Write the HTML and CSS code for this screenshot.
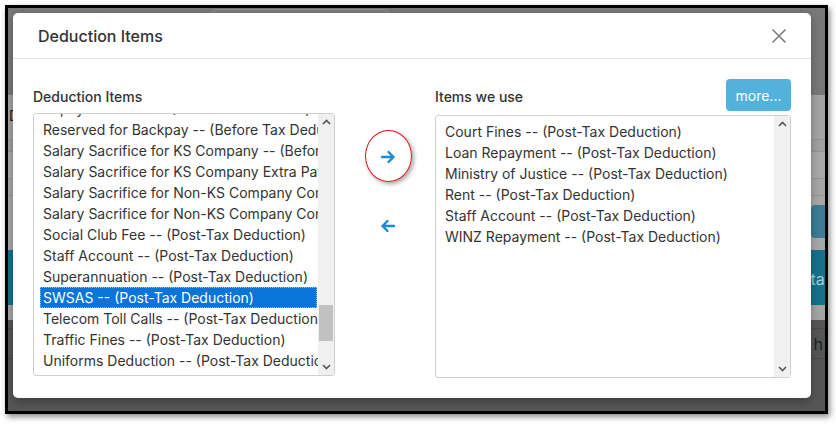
FILE: index.html
```html
<!DOCTYPE html>
<html>
<head>
<meta charset="utf-8">
<title>Deduction Items</title>
<link rel="stylesheet" href="styles.css">
</head>
<body>
<div class="shot">
  <div class="page">
    <div class="pg-top"><div class="pg-tab"></div></div>
    <div class="pg-rows">
      <div class="pg-row pg-row-a"><span class="pg-txt">Du</span></div>
      <div class="pg-row pg-row-b"></div>
      <div class="pg-row pg-row-c"></div>
      <div class="pg-row pg-row-d"></div>
      <div class="pg-btnrow"><span class="pg-btn"></span></div>
    </div>
    <div class="pg-teal"><span class="pg-teal-txt">Details</span></div>
    <div class="pg-gray"></div>
    <div class="pg-dark">
      <div class="pg-dark-row"></div>
      <div class="pg-dark-row pg-dark-txt"><span>go h</span></div>
    </div>
  </div>

  <div class="modal">
    <div class="modal-header">
      <h4 class="modal-title">Deduction Items</h4>
      <svg class="close" width="16" height="16" viewBox="0 0 16 16"><path d="M1.5 1.5 L14.5 14.5 M14.5 1.5 L1.5 14.5" stroke="#7a7a7a" stroke-width="1.5" fill="none"/></svg>
    </div>
    <div class="modal-body">
      <div class="col col-left">
        <div class="col-head"><span class="col-label">Deduction Items</span></div>
        <div class="listbox listbox-left">
          <div class="list-content">
            <div class="list-scroll">
              <div class="opt">Repayment Plan -- (Post-Tax Deduction)</div>
              <div class="opt">Reserved for Backpay -- (Before Tax Deduction)</div>
              <div class="opt">Salary Sacrifice for KS Company -- (Before Tax Deduction)</div>
              <div class="opt">Salary Sacrifice for KS Company Extra Payment -- (Before Tax Deduction)</div>
              <div class="opt">Salary Sacrifice for Non-KS Company Contribution -- (Before Tax Deduction)</div>
              <div class="opt">Salary Sacrifice for Non-KS Company Contribution Extra -- (Before Tax Deduction)</div>
              <div class="opt">Social Club Fee -- (Post-Tax Deduction)</div>
              <div class="opt">Staff Account -- (Post-Tax Deduction)</div>
              <div class="opt">Superannuation -- (Post-Tax Deduction)</div>
              <div class="opt opt-selected">SWSAS -- (Post-Tax Deduction)</div>
              <div class="opt">Telecom Toll Calls -- (Post-Tax Deduction)</div>
              <div class="opt">Traffic Fines -- (Post-Tax Deduction)</div>
              <div class="opt">Uniforms Deduction -- (Post-Tax Deduction)</div>
              <div class="opt">Union Fees -- (Post-Tax Deduction)</div>
            </div>
          </div>
          <div class="sbar">
            <div class="sbtn"><svg width="9" height="6" viewBox="0 0 9 6"><path d="M1 5 L4.5 1.5 L8 5" stroke="#555" stroke-width="1.6" fill="none"/></svg></div>
            <div class="strack"><div class="sthumb"></div></div>
            <div class="sbtn"><svg width="9" height="6" viewBox="0 0 9 6"><path d="M1 1 L4.5 4.5 L8 1" stroke="#555" stroke-width="1.6" fill="none"/></svg></div>
          </div>
        </div>
      </div>

      <div class="col-mid">
        <div class="mv-btn">
          <svg width="16" height="14" viewBox="0 0 16 14"><path d="M2 7 H13.5 M8.5 2 L13.5 7 L8.5 12" stroke="#1a8bd0" stroke-width="2.4" stroke-linecap="round" stroke-linejoin="round" fill="none"/></svg>
        </div>
        <div class="mv-btn">
          <svg width="16" height="14" viewBox="0 0 16 14"><path d="M14 7 H2.5 M7.5 2 L2.5 7 L7.5 12" stroke="#1a8bd0" stroke-width="2.4" stroke-linecap="round" stroke-linejoin="round" fill="none"/></svg>
        </div>
        <div class="annot"></div>
      </div>

      <div class="col col-right">
        <div class="col-head">
          <span class="col-label">Items we use</span>
          <button class="btn-more">more...</button>
        </div>
        <div class="listbox listbox-right">
          <div class="list-content">
            <div class="list-plain">
              <div class="opt">Court Fines -- (Post-Tax Deduction)</div>
              <div class="opt">Loan Repayment -- (Post-Tax Deduction)</div>
              <div class="opt">Ministry of Justice -- (Post-Tax Deduction)</div>
              <div class="opt">Rent -- (Post-Tax Deduction)</div>
              <div class="opt">Staff Account -- (Post-Tax Deduction)</div>
              <div class="opt">WINZ Repayment -- (Post-Tax Deduction)</div>
            </div>
          </div>
          <div class="sbar">
            <div class="sbtn"><svg width="9" height="6" viewBox="0 0 9 6"><path d="M1 5 L4.5 1.5 L8 5" stroke="#555" stroke-width="1.6" fill="none"/></svg></div>
            <div class="strack"></div>
            <div class="sbtn"><svg width="9" height="6" viewBox="0 0 9 6"><path d="M1 1 L4.5 4.5 L8 1" stroke="#555" stroke-width="1.6" fill="none"/></svg></div>
          </div>
        </div>
      </div>
    </div>
  </div>
</div>
</body>
</html>
```

FILE: styles.css
```css
* { box-sizing: border-box; }

html, body {
  margin: 0;
  padding: 0;
  background: #ffffff;
  width: 836px;
  height: 425px;
  overflow: hidden;
  font-family: Inter, "Noto Sans", "Liberation Sans", sans-serif;
}

.shot {
  position: relative;
  margin: 5px 0 0 5px;
  width: 823px;
  height: 409px;
  border: 3px solid #000;
  box-shadow: 2px 3px 6px rgba(0,0,0,0.45);
  overflow: hidden;
}

/* dimmed page behind the dialog */
.page {
  width: 100%;
  height: 100%;
  display: flex;
  flex-direction: column;
  background: #7a7a7a;
}
.pg-top {
  height: 87px;
  background: #787878;
  position: relative;
  padding-left: 202px;
}
.pg-tab {
  width: 180px;
  height: 10px;
  margin-top: 1px;
  border: 1px solid #8e8e8e;
  border-radius: 6px 6px 0 0;
  background: #7c7c7c;
}
.pg-rows {
  height: 155px;
  background: #a7a7a7;
  display: flex;
  flex-direction: column;
}
.pg-row { border-bottom: 1px solid #959595; }
.pg-row-a { height: 45px; background: #a3a3a3; padding: 10px 0 0 1px; }
.pg-txt { font-size: 14px; color: #222; }
.pg-row-b { height: 12px; background: #9f9f9f; }
.pg-row-c { height: 27px; background: #a9a9a9; }
.pg-row-d { height: 17px; background: #a6a6a6; }
.pg-btnrow {
  flex: 1;
  display: flex;
  justify-content: flex-end;
  padding-top: 9px;
}
.pg-btn {
  width: 14px;
  height: 33px;
  background: #3d7c95;
  border-radius: 4px 0 0 4px;
}
.pg-teal {
  height: 55px;
  background: #16718c;
  display: flex;
  justify-content: flex-end;
  align-items: center;
  padding-top: 2px;
}
.pg-teal-txt {
  font-size: 16px;
  color: #a9cbd6;
  margin-right: -16px;
}
.pg-gray { height: 15px; background: #a4a4a4; }
.pg-dark {
  flex: 1;
  background: #555555;
  display: flex;
  flex-direction: column;
}
.pg-dark-row { height: 9px; border-bottom: 1px solid #4a4a4a; }
.pg-dark-txt {
  height: 30px;
  display: flex;
  justify-content: flex-end;
  align-items: center;
  font-size: 16px;
  color: #1e1e1e;
}
.pg-dark-txt span { margin-right: 2px; }

/* dialog */
.modal {
  position: absolute;
  left: 5px;
  top: 5px;
  width: 798px;
  height: 385px;
  background: #fff;
  border-radius: 5px;
  box-shadow: 0 3px 9px rgba(0,0,0,0.3);
  display: flex;
  flex-direction: column;
}
.modal-header {
  height: 46px;
  border-bottom: 1px solid #e5e5e5;
  display: flex;
  align-items: center;
  justify-content: space-between;
  padding: 0 24px 0 25px;
}
.modal-title {
  margin: 0;
  font-size: 16px;
  font-weight: 500;
  color: #333;
  line-height: 20px;
}
.close { display: block; margin-top: 1px; }

.modal-body {
  display: flex;
  padding: 20px 20px 20px 20px;
}
.col { display: flex; flex-direction: column; }
.col-left { width: 302px; }
.col-right { width: 356px; }
.col-head {
  height: 32px;
  display: flex;
  align-items: center;
  justify-content: space-between;
}
.col-label {
  font-size: 14px;
  font-weight: 500;
  color: #333;
  line-height: 20px;
  padding-top: 4px;
}
.btn-more {
  width: 65px;
  height: 32px;
  border: 0;
  border-radius: 4px;
  background: #53b1de;
  color: #fff;
  font-family: inherit;
  font-size: 14px;
  padding: 0;
}

.listbox {
  height: 263px;
  border: 1px solid #cdd1d6;
  border-radius: 3px;
  display: flex;
  overflow: hidden;
}
.listbox-left { margin-top: 2px; }
.listbox-right { margin-top: 4px; }
.list-content {
  flex: 1;
  min-width: 0;
  overflow: hidden;
  padding: 0 0 0 6px;
}
.list-scroll { margin-top: -16px; }
.list-plain { padding-top: 5px; }
.opt {
  height: 21px;
  line-height: 21px;
  padding: 0 3px;
  font-size: 14px;
  color: #333;
  white-space: nowrap;
  overflow: hidden;
}
.opt-selected {
  background: #0a74d9;
  color: #fff;
  outline: 1px dotted #8fc2f2;
  outline-offset: -1px;
  margin-right: 1px;
}

.sbar {
  width: 16px;
  background: #f0f0f0;
  display: flex;
  flex-direction: column;
}
.sbtn {
  height: 16px;
  display: flex;
  align-items: center;
  justify-content: center;
}
.strack { flex: 1; }
.sthumb {
  margin: 175px 1px 0 1px;
  height: 36px;
  background: #c1c1c1;
}

.col-mid {
  position: relative;
  width: 100px;
  display: flex;
  flex-direction: column;
  padding: 66px 0 0 45px;
  gap: 45px;
}
.mv-btn {
  width: 16px;
  height: 24px;
  display: flex;
  align-items: center;
}
.annot {
  position: absolute;
  left: 30px;
  top: 51px;
  width: 47px;
  height: 52px;
  border: 1.5px solid #e0141a;
  border-radius: 50%;
  box-shadow: 2px 2px 4px rgba(0,0,0,0.35);
}
```
